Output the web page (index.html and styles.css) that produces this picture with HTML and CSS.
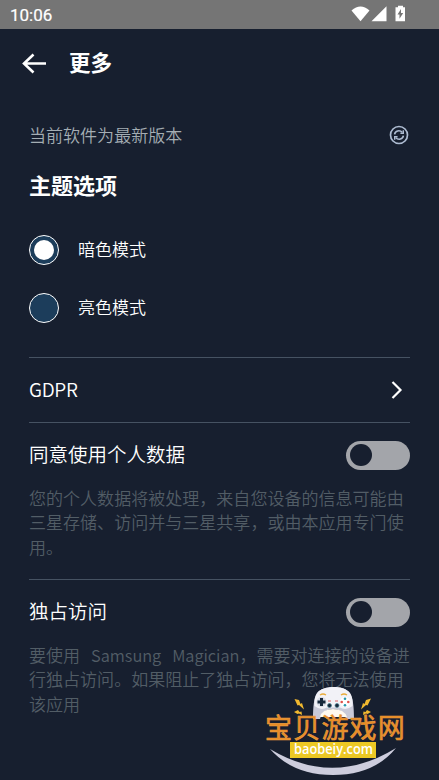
FILE: index.html
```html
<!DOCTYPE html>
<html lang="zh-CN">
<head>
<meta charset="utf-8">
<meta name="viewport" content="width=device-width, initial-scale=1">
<title>更多</title>
<link rel="stylesheet" href="styles.css">
</head>
<body>
<div class="statusbar">
  <span class="clock">10:06</span>
  <svg class="status-icons" width="56" height="18" viewBox="0 0 56 18" fill="#fff">
    <path d="M.5 5.600Q9.500-2.500 18.500 5.600L9.500 16.300Z"/>
    <path d="M35.500 1.200V16.300H20.500Z"/>
    <path d="M47 .8h5v1.500h2v14h-9.500v-14h2.500Z"/>
    <path d="M50 4 46.500 9.500h2v4.200l3.700-5.700h-2.200Z" fill="#757575"/>
  </svg>
</div>
<header class="appbar">
  <svg class="back" width="26" height="22" viewBox="0 0 26 22" fill="none" stroke="#fff" stroke-width="2.600"><path d="M25 11.500H2.500M12.500 2.500 3 11.500l9.500 9"/></svg>
  <h1>更多</h1>
</header>
<main>
  <div class="version">
    <span>当前软件为最新版本</span>
    <svg width="20" height="20" viewBox="0 0 20 20" fill="none" stroke="#aebcd2" stroke-width="1.700">
      <circle cx="10" cy="10" r="8.500"/>
      <path d="M5.600 9.300C6 5.700 10.800 4.700 13.200 7.300M14.400 10.700C14 14.300 9.200 15.300 6.800 12.700" stroke-width="1.600"/>
      <path d="M14.300 5.300V8.200H11.400M5.700 14.700V11.800H8.600" stroke-width="1.400"/>
    </svg>
  </div>
  <h2>主题选项</h2>
  <div class="option"><span class="radio selected"></span><span class="name">暗色模式</span></div>
  <div class="option"><span class="radio"></span><span class="name">亮色模式</span></div>
  <section class="row link">
    <span class="label gdpr">GDPR</span>
    <svg class="chevron" width="12" height="18" viewBox="0 0 12 18" fill="none" stroke="#fff" stroke-width="2.200"><path d="m1.500 1 8 8-8 8"/></svg>
  </section>
  <section class="consent">
    <div class="row"><span class="label">同意使用个人数据</span><span class="switch"></span></div>
    <p>您的个人数据将被处理，来自您设备的信息可能由<br>三星存储、访问并与三星共享，或由本应用专门使<br>用。</p>
  </section>
  <section class="consent">
    <div class="row"><span class="label">独占访问</span><span class="switch"></span></div>
    <p>要使用<span class="latin">Samsung</span><span class="latin">Magician</span>，需要对连接的设备进<br>行独占访问。如果阻止了独占访问，您将无法使用<br>该应用</p>
  </section>
</main>
<svg class="watermark" width="150" height="100" viewBox="260 680 150 100">
  <path d="M270 749Q333 787 396 748Q374 775 333 775Q293 775 270 749Z" fill="#cdcddd"/>
  <path d="M313 719C313 707 314 697 317 693C323 685 344 685 350 693C353 698 354 707 354 719H346Q344 709 333 709Q322 709 320 719Z" fill="#c9cad8"/>
  <path d="M314.500 706C314 698 316 694 319 691C326 685.500 342 685.500 348 691C352 695 353 699 352.500 706Q346 711 340 707.500H327Q321 711 314.500 706Z" fill="#f2f2f7"/>
  <path d="M320 717Q322 709 333 709Q344 709 347 717Z" fill="#fffaf0"/>
  <path d="M320 695Q323 693 326 695M341 695Q344 693 347 695" stroke="#e9ad3c" fill="none" stroke-width="1.300"/>
  <circle cx="321.500" cy="702" r="5" fill="#d9dce6"/>
  <path d="M321.500 698v8M317.500 702h8" stroke="#17283b" stroke-width="3"/>
  <circle cx="345" cy="702" r="5" fill="#fff"/>
  <g fill="#e0524b"><circle cx="341.700" cy="702" r="1.300"/><circle cx="348.300" cy="702" r="1.300"/></g>
  <g fill="#2697ad"><circle cx="345" cy="698.700" r="1.300"/><circle cx="345" cy="705.300" r="1.300"/></g>
  <path d="M328 701h3M335 701h3" stroke="#da6266"/>
  <g fill="#17283b" stroke="#4a8394" stroke-width=".7"><circle cx="329.500" cy="705.500" r="2"/><circle cx="337" cy="705.500" r="2"/></g>
  <g fill="#f0b82f">
    <path d="m294.500 699 4.500 1 1.500 4 1.500-1 2 6.500-5-4.500-1.500.5Z"/><path d="m294 712 4-2 1.500 2 2-.5.500 3.500-3-1.500-1.500.5Z"/>
    <path d="m371 698.500-5 1.500-1.500 4-1.500-1-2 6.500 5-4.500 1.500.5Z"/><path d="m371 712-4-2-1.500 2-2-.5-.5 3.500 3-1.500 1.500.5Z"/>
  </g>
  <text class="brand" x="265" y="737.500">宝贝游戏网</text>
  <path d="M290 742h86v16h-86Z" fill="#ecc824"/>
  <text class="domain" x="294" y="754" textLength="79" lengthAdjust="spacingAndGlyphs">baobeiy.com</text>
</svg>
</body>
</html>
```
FILE: styles.css
```css
* { box-sizing: border-box; }
body {
  margin: 0;
  width: 439px;
  height: 780px;
  overflow: hidden;
  position: relative;
  background: #171f2f;
  color: #fff;
  font-family: "Noto Sans CJK SC", sans-serif;
  font-weight: 350;
}
.statusbar {
  height: 29px;
  background: #757575;
  display: flex;
  align-items: center;
  justify-content: space-between;
  padding: 0 32px 0 10px;
}
.clock { font: 400 17px/28px Roboto, sans-serif; padding-top: 1px; -webkit-text-stroke: .2px #fff; }
.status-icons { display: block; margin-top: -1px; }
.appbar {
  height: 68px;
  display: flex;
  align-items: center;
  padding-left: 21px;
  gap: 22px;
}
h1, h2 { margin: 0; font-weight: 700; }
h1 { font-size: 21.500px; line-height: 30px; padding-bottom: 2px; }
main { padding: 0 29px; }
.version {
  height: 76px;
  display: flex;
  align-items: center;
  justify-content: space-between;
  font-size: 17.050px;
  color: #a4adb3;
}
.version span { padding-bottom: 2px; }
.version svg { margin-right: 1px; }
h2 { font-size: 22px; line-height: 28px; margin-top: -3px; }
.option {
  height: 58px;
  display: flex;
  align-items: center;
  gap: 19px;
  font-size: 17px;
}
.option .name { padding-bottom: 3px; }
h2 + .option { margin-top: 23px; }
.radio {
  width: 30px;
  height: 30px;
  border: 1.500px solid #fff;
  border-radius: 50%;
  background: #1c3d5b;
  display: flex;
  align-items: center;
  justify-content: center;
}
.radio.selected::before {
  content: "";
  width: 20px;
  height: 20px;
  border-radius: 50%;
  background: #fff;
}
.row { height: 64px; display: flex; align-items: center; justify-content: space-between; }
.label { font-size: 19.500px; line-height: 28px; padding-bottom: 2px; }
.gdpr { font-size: 19px; letter-spacing: -.3px; }
.link { height: 65px; margin-top: 20px; border-top: 1px solid #465262; }
.chevron { margin-right: 7px; }
.consent { height: 157px; border-top: 1px solid #465262; }
.switch {
  width: 64px;
  height: 29px;
  border-radius: 15px;
  background: #a3a5aa;
  display: flex;
  align-items: center;
  padding-left: 4px;
}
.switch::before {
  content: "";
  width: 22px;
  height: 22px;
  border-radius: 50%;
  background: #171f2f;
}
p {
  margin: -1.500px 0 0;
  color: #525d66;
  font-size: 17.050px;
  line-height: 24.500px;
  white-space: nowrap;
}
.latin { margin-left: 11px; font-size: 16.400px; letter-spacing: -.05px; }
.watermark { position: absolute; left: 260px; top: 680px; }
.brand {
  font: 400 27px "Noto Sans CJK SC", sans-serif;
  letter-spacing: 1.200px;
  fill: #e88b24;
  stroke: #e99b40;
  stroke-width: .6px;
}
.domain { font: 600 14.500px "Open Sans", sans-serif; fill: #fff; }
```
